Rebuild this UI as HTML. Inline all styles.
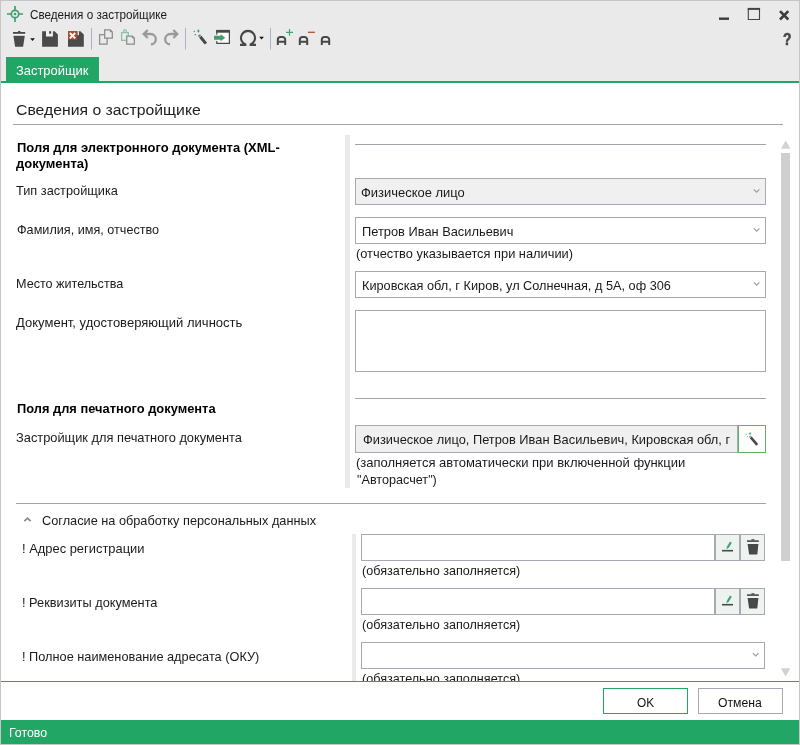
<!DOCTYPE html>
<html><head><meta charset="utf-8">
<style>
*{box-sizing:border-box;margin:0;padding:0}
html,body{width:800px;height:745px;overflow:hidden;background:#eaeaea}
body{font-family:"Liberation Sans",sans-serif;font-size:13px;color:#1a1a1a;position:relative}
.abs{position:absolute}
.t{position:absolute;white-space:nowrap;line-height:16px;font-size:13px;transform-origin:0 0;filter:grayscale(1)}
.b{font-weight:bold}
.ln{position:absolute;height:1px;background:#a3a3ab}
.box{position:absolute;border:1px solid #a9a9b3;background:#fff}
.gbox{background:#f0f0f0}
.btn{background:#eef3f0}
svg{position:absolute;left:0;top:0;overflow:visible}
</style></head><body>
<!-- window frame -->
<div class="abs" style="left:0;top:0;width:800px;height:745px;border:1px solid #c6c6c6"></div>

<!-- content backgrounds -->
<div class="abs" style="left:6px;top:57px;width:93px;height:25px;background:#22a665"></div>
<div class="abs" style="left:1px;top:81px;width:798px;height:2px;background:#22a665"></div>
<div class="abs" style="left:1px;top:83px;width:798px;height:598px;background:#fff"></div>
<div class="ln" style="left:13px;top:124px;width:770px"></div>

<!-- splitters -->
<div class="abs" style="left:345px;top:135px;width:5px;height:353px;background:#eaeaea"></div>
<div class="abs" style="left:352px;top:534px;width:4px;height:147px;background:#eaeaea"></div>

<!-- right column boxes -->
<div class="ln" style="left:355px;top:144px;width:411px"></div>
<div class="box gbox" style="left:355px;top:178px;width:411px;height:27px"></div>
<div class="box" style="left:355px;top:217px;width:411px;height:27px"></div>
<div class="box" style="left:355px;top:271px;width:411px;height:27px"></div>
<div class="box" style="left:355px;top:310px;width:411px;height:62px"></div>
<div class="ln" style="left:355px;top:398px;width:411px"></div>
<div class="box gbox" style="left:355px;top:425px;width:383px;height:28px"></div>
<div class="box" style="left:738px;top:425px;width:28px;height:28px;border-color:#5cb567"></div>
<div class="ln" style="left:16px;top:503px;width:750px"></div>

<div class="box" style="left:361px;top:534px;width:354px;height:27px"></div>
<div class="box btn" style="left:715px;top:534px;width:25px;height:27px"></div>
<div class="box btn" style="left:740px;top:534px;width:25px;height:27px"></div>
<div class="box" style="left:361px;top:588px;width:354px;height:27px"></div>
<div class="box btn" style="left:715px;top:588px;width:25px;height:27px"></div>
<div class="box btn" style="left:740px;top:588px;width:25px;height:27px"></div>
<div class="box" style="left:361px;top:642px;width:404px;height:27px"></div>

<!-- scrollbar thumb -->
<div class="abs" style="left:781px;top:153px;width:9px;height:408px;background:#cfcfcf"></div>

<div class="t" id="title" style="left:29.7px;top:7px;font-size:12px;color:#1a1a1a;transform:scaleX(0.9748)">Сведения о застройщике</div>
<div class="t" id="tab" style="left:15.8px;top:63px;font-size:13px;color:#fff;transform:scaleX(0.9930)">Застройщик</div>
<div class="t" id="h1" style="left:16.4px;top:102px;font-size:15.5px;color:#1e1e1e;transform:scaleX(1.0178)">Сведения о застройщике</div>
<div class="t b" id="l1" style="left:17.0px;top:140px;font-size:13px;color:#000;transform:scaleX(0.9980)">Поля для электронного документа (XML-</div>
<div class="t b" id="l1b" style="left:16.0px;top:156px;font-size:13px;color:#000;transform:scaleX(0.9993)">документа)</div>
<div class="t" id="l2" style="left:16.2px;top:183px;font-size:13px;color:#1a1a1a;transform:scaleX(0.9811)">Тип застройщика</div>
<div class="t" id="l3" style="left:16.5px;top:222px;font-size:13px;color:#1a1a1a;transform:scaleX(0.9719)">Фамилия, имя, отчество</div>
<div class="t" id="l4" style="left:16.03px;top:276px;font-size:13px;color:#1a1a1a;transform:scaleX(0.9684)">Место жительства</div>
<div class="t" id="l5" style="left:16.0px;top:315px;font-size:13px;color:#1a1a1a;transform:scaleX(1.0024)">Документ, удостоверяющий личность</div>
<div class="t b" id="l6" style="left:17.0px;top:401px;font-size:13px;color:#000;transform:scaleX(0.9894)">Поля для печатного документа</div>
<div class="t" id="l7" style="left:16.2px;top:430px;font-size:13px;color:#1a1a1a;transform:scaleX(0.9869)">Застройщик для печатного документа</div>
<div class="t" id="r1" style="left:360.5px;top:185px;font-size:13px;color:#1a1a1a;transform:scaleX(0.9959)">Физическое лицо</div>
<div class="t" id="r2" style="left:361.81px;top:224px;font-size:13px;color:#1a1a1a;transform:scaleX(0.9873)">Петров Иван Васильевич</div>
<div class="t" id="r3" style="left:355.8px;top:246px;font-size:13px;color:#1a1a1a;transform:scaleX(0.9868)">(отчество указывается при наличии)</div>
<div class="t" id="r4" style="left:361.62px;top:278px;font-size:13px;color:#1a1a1a;transform:scaleX(0.9794)">Кировская обл, г Киров, ул Солнечная, д 5А, оф 306</div>
<div class="t" id="r5" style="left:362.6px;top:432px;font-size:13px;color:#1a1a1a;transform:scaleX(0.9868)">Физическое лицо, Петров Иван Васильевич, Кировская обл, г</div>
<div class="t" id="r6" style="left:356.0px;top:455px;font-size:13px;color:#1a1a1a;transform:scaleX(0.9996)">(заполняется автоматически при включенной функции</div>
<div class="t" id="r7" style="left:356.5px;top:472px;font-size:13px;color:#1a1a1a;transform:scaleX(0.9707)">&quot;Авторасчет&quot;)</div>
<div class="t" id="e1" style="left:41.5px;top:513px;font-size:13px;color:#1a1a1a;transform:scaleX(0.9795)">Согласие на обработку персональных данных</div>
<div class="t" id="e2" style="left:21.81px;top:541px;font-size:13px;color:#1a1a1a;transform:scaleX(0.9923)">! Адрес регистрации</div>
<div class="t" id="e3" style="left:21.82px;top:595px;font-size:13px;color:#1a1a1a;transform:scaleX(0.9819)">! Реквизиты документа</div>
<div class="t" id="e4" style="left:21.82px;top:649px;font-size:13px;color:#1a1a1a;transform:scaleX(0.9807)">! Полное наименование адресата (ОКУ)</div>
<div class="t" id="m1" style="left:361.8px;top:563px;font-size:13px;color:#1a1a1a;transform:scaleX(0.9701)">(обязательно заполняется)</div>
<div class="t" id="m2" style="left:361.8px;top:617px;font-size:13px;color:#1a1a1a;transform:scaleX(0.9701)">(обязательно заполняется)</div>
<div class="t" id="m3" style="left:361.8px;top:671px;font-size:13px;color:#1a1a1a;transform:scaleX(0.9701)">(обязательно заполняется)</div>
<div class="t b" id="help" style="left:783.4px;top:32px;font-size:16px;color:#444;transform:scaleX(0.8667);-webkit-text-stroke:0.5px #444">?</div>

<!-- bottom -->
<div class="abs" style="left:1px;top:681px;width:798px;height:1px;background:#22a665"></div>
<div class="abs" style="left:1px;top:682px;width:798px;height:38px;background:#fff"></div>
<div class="box" style="left:603px;top:688px;width:85px;height:26px;border-color:#22a665"></div>
<div class="box" style="left:698px;top:688px;width:85px;height:26px"></div>
<div class="abs" style="left:1px;top:720px;width:798px;height:24px;background:#22a665"></div>

<div class="t" id="ok" style="left:637.2px;top:695px;font-size:13.5px;color:#111;transform:scaleX(0.8769)">OK</div>
<div class="t" id="cancel" style="left:718.3px;top:695px;font-size:13.5px;color:#111;transform:scaleX(0.9054)">Отмена</div>
<div class="t" id="st" style="left:9.05px;top:725px;font-size:13px;color:#fff;transform:scaleX(0.9508)">Готово</div>

<!-- all icons: absolute pixel coordinates -->
<svg width="800" height="745" viewBox="0 0 800 745">
 <!-- app icon -->
 <g fill="none" stroke="#3f9f70" stroke-width="1.7"><circle cx="15" cy="14" r="3.7"/><path d="M15 6V10.6M15 17.4V22M7 14H11.6M18.4 14H23"/></g>
 <circle cx="15" cy="14" r="1.3" fill="#3f9f70"/>
 <!-- window controls -->
 <rect x="719" y="17.5" width="10" height="2.4" fill="#3c3c3c"/>
 <path d="M748.3 9V19.5H759.5V9" fill="none" stroke="#444" stroke-width="1.1"/><rect x="747.7" y="7.9" width="12.4" height="2" fill="#444"/>
 <path d="M780 11.2L788.3 19.5M788.3 11.2L780 19.5" stroke="#3c3c3c" stroke-width="2.6" fill="none"/>

 <!-- toolbar: trash + arrow -->
 <rect x="13" y="33.8" width="12.2" height="2" fill="#f7f7f7"/><g fill="#4a4a4a"><rect x="13" y="32" width="12.2" height="1.85"/><rect x="18" y="31" width="2.4" height="1.3"/><path d="M13.4 35.8H24.8L23.1 46.7H15.1Z"/></g>
 <path d="M30.2 38.3H34.9L32.55 41.1Z" fill="#111"/>
 <!-- save -->
 <path d="M42.1 31.2H54.6L57.9 34.5V46.8H42.1Z" fill="#4a4a4a"/><rect x="46" y="31" width="6.9" height="5.5" fill="#f2f2f2"/><rect x="49.1" y="31.2" width="2.1" height="2.5" fill="#4a4a4a"/>
 <!-- save & close -->
 <path d="M68 31.2H80.4L83.8 34.5V46.8H68Z" fill="#4a4a4a"/><rect x="77.6" y="31.2" width="1.3" height="4" fill="#f2f2f2"/>
 <rect x="68" y="31.2" width="9" height="8.4" fill="#b5492c"/><path d="M69.8 33L75.2 38.4M75.2 33L69.8 38.4" stroke="#fff" stroke-width="1.8"/>
 <!-- separators -->
 <g stroke="#a9b2c6" stroke-width="1"><path d="M91.5 28V49.5M185.5 28V49.5M270.5 28V49.5"/></g>
 <!-- copy -->
 <g fill="#ebebeb" stroke="#8b8b8b" stroke-width="1.25"><rect x="99.6" y="34.7" width="7.5" height="9.4"/><path d="M104.7 29.8H110.2L112.3 31.9V38H104.7Z"/><path d="M110.2 30V31.9H112.1Z" fill="#8b8b8b" stroke-width="0.6"/></g>
 <!-- paste -->
 <g fill="none" stroke="#8ec2a8" stroke-width="1.3"><rect x="121.6" y="32.6" width="6.7" height="7.8"/><path d="M123.3 32.6L124.2 29.9H125.8L126.7 32.6"/></g>
 <g fill="#ebebeb" stroke="#8b8b8b" stroke-width="1.25"><path d="M126.7 36H132.2L134.3 38.1V44.1H126.7Z"/><path d="M132.2 36.2V38.1H134.1Z" fill="#8b8b8b" stroke-width="0.6"/></g>
 <!-- undo / redo -->
 <g fill="none" stroke="#9a9a9a" stroke-width="2.3"><path d="M147.7 30L143.7 34L147.7 38M144 34H150.6A5.2 5.2 0 0 1 155.8 39.2A5.2 5.2 0 0 1 150.9 44.39"/><path d="M173.3 30L177.3 34L173.3 38M177 34H170.4A5.2 5.2 0 0 0 165.2 39.2A5.2 5.2 0 0 0 170.1 44.39"/></g>
 <!-- wand -->
 <g fill="#45a073"><path d="M198.4 29.3L199.7 31L198.4 32.7L197.1 31Z"/><path d="M193.1 31.4L194.9 30.5V32.3Z"/><path d="M194.4 33.9L196.3 34.1L195.3 35.8Z"/></g>
 <path d="M198.9 35L200 36.3" stroke="#777" stroke-width="2.6"/><path d="M200.3 36.7L205.9 43.6" stroke="#484848" stroke-width="3"/>
 <!-- import -->
 <rect x="216.8" y="32" width="12.6" height="11.4" fill="#fbfbfb"/>
 <g fill="none" stroke="#4a4a4a" stroke-width="1.2"><path d="M216.8 34.7V30.6H229.4V43.4H216.8V40.9"/></g><rect x="216.2" y="29.9" width="13.8" height="2.8" fill="#4a4a4a"/>
 <path d="M214 35.8H220.6V34.3L225.2 37.8L220.6 41.2V39.8H214Z" fill="#459a6e" stroke="#f6f6f6" stroke-width="1" paint-order="stroke fill"/>
 <!-- omega -->
 <path d="M240 44.9H246.4M246.1 44.65A7 7 0 1 1 249.9 44.65M249.6 44.9H256" fill="none" stroke="#484848" stroke-width="2.1" stroke-linejoin="bevel"/>
 <path d="M259.2 36.8H263.9L261.55 39.6Z" fill="#111"/>
 <!-- A+ A- A -->
 <g fill="none" stroke="#484848" stroke-width="2"><path d="M277.8 44.9V39.8A2.8 2.8 0 0 1 280.6 37H282.4A2.8 2.8 0 0 1 285.2 39.8V44.9M277.8 41.7H285.2"/><path transform="translate(22 0)" d="M277.8 44.9V39.8A2.8 2.8 0 0 1 280.6 37H282.4A2.8 2.8 0 0 1 285.2 39.8V44.9M277.8 41.7H285.2"/><path transform="translate(44 0)" d="M277.8 44.9V39.8A2.8 2.8 0 0 1 280.6 37H282.4A2.8 2.8 0 0 1 285.2 39.8V44.9M277.8 41.7H285.2"/></g>
 <path d="M286 32.3H293M289.5 28.9V35.8" stroke="#3fa574" stroke-width="1.2"/>
 <path d="M308 32.3H314.9" stroke="#b5502f" stroke-width="1.3"/>

 <!-- combo chevrons -->
 <g fill="none" stroke="#9a9a9a" stroke-width="1.1"><path d="M753.8 189.3L756.6 192.1L759.4 189.3"/><path transform="translate(0 39)" d="M753.8 189.3L756.6 192.1L759.4 189.3"/><path transform="translate(0 93)" d="M753.8 189.3L756.6 192.1L759.4 189.3"/><path transform="translate(-0.9 463.8)" d="M753.8 189.3L756.6 192.1L759.4 189.3"/></g>
 <!-- wand small -->
 <g stroke="#4aa97c" stroke-width="0.9" fill="none"><path d="M750 432.3V434.9M748.7 433.6H751.3M745.7 434.2H746.9M746.9 436.8H748.1"/></g>
 <path d="M749.6 436L750.8 437.4" stroke="#9a9a9a" stroke-width="2.2"/><path d="M750.8 437.4L757.2 444.8" stroke="#484848" stroke-width="2.6"/>
 <!-- expander caret -->
 <path d="M24.3 521.2L27.5 518.1L30.7 521.2" fill="none" stroke="#8a8a8a" stroke-width="1.7"/>
 <!-- pencil + small trash, two rows -->
 <g><path d="M726.3 549.2L727 546.6L730 541.6L731.8 542.7L728.8 547.7Z" fill="#3fa574"/><path d="M722 550.7H733" stroke="#484848" stroke-width="1.6"/>
 <g fill="#484848"><rect x="747" y="540.3" width="11.8" height="1.6"/><rect x="751.4" y="539.2" width="3" height="1.3"/><path d="M747.6 544H758.4L757.3 554.6H749.1Z"/></g></g>
 <g transform="translate(0 54)"><path d="M726.3 549.2L727 546.6L730 541.6L731.8 542.7L728.8 547.7Z" fill="#3fa574"/><path d="M722 550.7H733" stroke="#484848" stroke-width="1.6"/>
 <g fill="#484848"><rect x="747" y="540.3" width="11.8" height="1.6"/><rect x="751.4" y="539.2" width="3" height="1.3"/><path d="M747.6 544H758.4L757.3 554.6H749.1Z"/></g></g>
 <!-- scrollbar arrows -->
 <path d="M785.7 140.4L790.5 148.8H781Z" fill="#d2d2d2"/><path d="M780.9 668.2H790.4L785.6 676.6Z" fill="#d2d2d2"/>
</svg>
</body></html>
